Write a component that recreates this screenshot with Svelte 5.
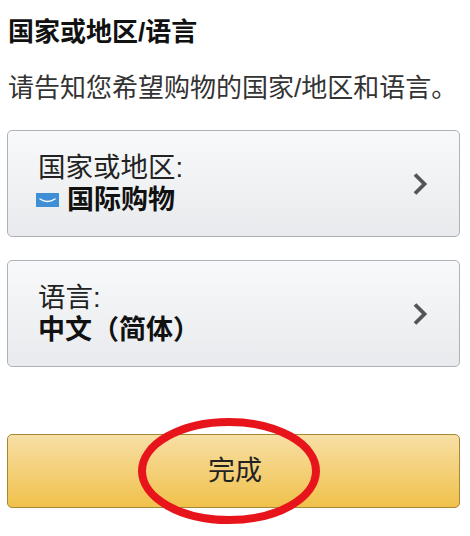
<script>
  const rows = [
    { label: '国家或地区:', value: '国际购物', flag: true },
    { label: '语言:', value: '中文（简体）', flag: false }
  ];
</script>

<main class="page">
  <h1>国家或地区/语言</h1>
  <p class="intro">请告知您希望购物的国家/地区和语言。</p>
  {#each rows as row}
    <button class="row">
      <span class="text">
        <span class="label">{row.label}</span>
        <span class="value">
          {#if row.flag}
            <svg class="flag" viewBox="0 0 23 14" aria-hidden="true">
              <rect width="23" height="14" rx="0.5" fill="#3f8fd6" />
              <path d="M4 6 Q11.5 11 19 6" fill="none" stroke="#fff" stroke-width="1.5" stroke-linecap="round" />
            </svg>
          {/if}
          {row.value}
        </span>
      </span>
      <svg class="chev" viewBox="0 0 15 24" aria-hidden="true">
        <path d="M2 2.5 L11.5 12 L2 21.5" fill="none" stroke="#555" stroke-width="3.8" />
      </svg>
    </button>
  {/each}
  <div class="done-wrap">
    <button class="done">完成</button>
    <svg class="ring" viewBox="0 0 182 106" aria-hidden="true">
      <ellipse cx="91" cy="53" rx="87" ry="49" fill="none" stroke="#e8141c" stroke-width="8" />
    </svg>
  </div>
</main>

<style>
  :global(body) {
    margin: 0;
    background: #fff;
  }
  .page {
    width: 470px;
    height: 536px;
    box-sizing: border-box;
    padding: 17px 0 0 7px;
    font-family: "Liberation Sans", "Noto Sans CJK SC", sans-serif;
    color: #111;
    overflow: hidden;
  }
  h1 {
    margin: 0 0 0 1px;
    font-size: 26px;
    line-height: 30px;
    font-weight: 700;
    white-space: nowrap;
  }
  .intro {
    margin: 25px 0 0 1px;
    font-size: 26px;
    line-height: 32px;
    color: #333;
    white-space: nowrap;
  }
  .row {
    display: flex;
    align-items: center;
    justify-content: space-between;
    width: 453px;
    height: 107px;
    box-sizing: border-box;
    margin: 0 0 23px;
    padding: 0 31px 0 30px;
    border: 1px solid #adb1b8;
    border-radius: 5px;
    background: linear-gradient(#f8f9fa, #e8eaed);
    font: inherit;
    color: inherit;
    text-align: left;
  }
  .intro + .row {
    margin-top: 26px;
  }
  .text {
    display: flex;
    flex-direction: column;
  }
  .label {
    font-size: 27.5px;
    line-height: 32px;
    color: #222;
  }
  .value {
    display: flex;
    align-items: center;
    gap: 8px;
    font-size: 27px;
    line-height: 32px;
    font-weight: 700;
  }
  .flag {
    width: 23px;
    height: 14px;
    margin-left: -2px;
  }
  .chev {
    width: 15px;
    height: 24px;
  }
  .done-wrap {
    position: relative;
    margin-top: 67px;
    width: 453px;
  }
  .done {
    display: block;
    width: 453px;
    height: 74px;
    padding: 0 0 5px 3px;
    border: 1px solid #a88734;
    border-radius: 5px;
    background: linear-gradient(#f7dfa5, #f0c14b);
    font: inherit;
    font-size: 27px;
    color: #222;
  }
  .ring {
    position: absolute;
    left: 131px;
    top: -16px;
    width: 182px;
    height: 106px;
    pointer-events: none;
  }
</style>
